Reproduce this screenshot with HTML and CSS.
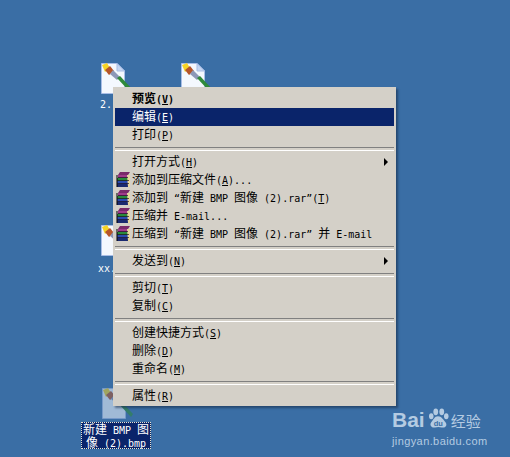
FILE: index.html
```html
<!DOCTYPE html>
<html lang="zh-CN">
<head>
  <meta charset="UTF-8" />
  <title>桌面右键菜单</title>
  <link rel="stylesheet" href="styles.css">
</head>
<body>
  <svg class="defs" width="0" height="0">
    <symbol id="bmp" viewBox="0 0 32 32">
      <path d="M1.5 0.5H17L24.5 8V30.5H1.5Z" fill="#f4f8fe" stroke="#a8bde6"/>
      <path d="M17 0.5V8H24.5Z" fill="#c5d6f2" stroke="#a8bde6"/>
      <path d="M2 2L7 0L10 5L5 9Z" fill="#f5d327"/>
      <path d="M5 7L10 3L14 8L9 12Z" fill="#b5552a"/>
      <path d="M10 11L13 7L20 14L17 17Z" fill="#8c97b8"/>
      <path d="M17 15L20 13L32 26L30 29Z" fill="#2f8a3a"/>
    </symbol>
    <symbol id="rar" viewBox="0 0 16 16">
      <path d="M4 0H14L12 3H2Z" fill="#7a2a6a"/>
      <path d="M2 3H12V6H2Z" fill="#a03a8a"/>
      <path d="M1 6H13V9H1Z" fill="#2a8a3a"/>
      <path d="M1 9H13V12H1Z" fill="#2a4ab0"/>
      <path d="M1 12H14V15H1Z" fill="#1a2a70"/>
      <path d="M11 3H14V15H12Z" fill="#e8d8a0"/>
      <path d="M1 3V15" stroke="#000"/>
      <path d="M2 5.5H12M1 8.5H13M1 11.5H13" stroke="#1a1020" stroke-width="0.7"/>
    </symbol>
  </svg>

  <div class="desktop-icon icon-one">
    <svg class="file-icon"><use href="#bmp"/></svg>
    <span class="icon-label">2.</span>
  </div>
  <div class="desktop-icon icon-two">
    <svg class="file-icon"><use href="#bmp"/></svg>
  </div>
  <div class="desktop-icon icon-three">
    <svg class="file-icon"><use href="#bmp"/></svg>
    <span class="icon-label">xx.</span>
  </div>
  <div class="desktop-icon icon-selected">
    <svg class="file-icon"><use href="#bmp"/></svg>
    <div class="selected-label">
      <div class="label-line">新建 <span class="en">BMP</span> 图</div>
      <div class="label-line">像 <span class="en">(2).bmp</span></div>
    </div>
  </div>

  <ul class="menu">
    <li class="item default">预览<span class="en">(<u>V</u>)</span></li>
    <li class="item active">编辑<span class="en">(<u>E</u>)</span></li>
    <li class="item">打印<span class="en">(<u>P</u>)</span></li>
    <li class="sep"></li>
    <li class="item more">打开方式<span class="en">(<u>H</u>)</span></li>
    <li class="item"><svg class="rar-icon"><use href="#rar"/></svg>添加到压缩文件<span class="en">(<u>A</u>)...</span></li>
    <li class="item"><svg class="rar-icon"><use href="#rar"/></svg>添加到 <span class="en">“</span>新建 <span class="en">BMP</span> 图像 <span class="en">(2).rar”(<u>T</u>)</span></li>
    <li class="item"><svg class="rar-icon"><use href="#rar"/></svg>压缩并 <span class="en">E-mail...</span></li>
    <li class="item"><svg class="rar-icon"><use href="#rar"/></svg>压缩到 <span class="en">“</span>新建 <span class="en">BMP</span> 图像 <span class="en">(2).rar”</span> 并 <span class="en">E-mail</span></li>
    <li class="sep"></li>
    <li class="item more">发送到<span class="en">(<u>N</u>)</span></li>
    <li class="sep"></li>
    <li class="item">剪切<span class="en">(<u>T</u>)</span></li>
    <li class="item">复制<span class="en">(<u>C</u>)</span></li>
    <li class="sep"></li>
    <li class="item">创建快捷方式<span class="en">(<u>S</u>)</span></li>
    <li class="item">删除<span class="en">(<u>D</u>)</span></li>
    <li class="item">重命名<span class="en">(<u>M</u>)</span></li>
    <li class="sep"></li>
    <li class="item">属性<span class="en">(<u>R</u>)</span></li>
  </ul>

  <div class="watermark">
    <div class="brand">
      <span class="bai">Bai</span>
      <svg class="paw" viewBox="0 0 32 28">
        <ellipse cx="7" cy="11" rx="3" ry="4"/>
        <ellipse cx="13" cy="5" rx="3.2" ry="4.5"/>
        <ellipse cx="21" cy="5" rx="3.2" ry="4.5"/>
        <ellipse cx="27" cy="11" rx="3" ry="4"/>
        <path d="M16 11C11 11 10 16 7 19C4 23 8 27 12 26C15 25 18 25 21 26C26 27 29 23 26 19C23 16 21 11 16 11Z"/>
        <text x="16.5" y="24" class="paw-text">du</text>
      </svg>
      <span class="jy">经验</span>
    </div>
    <div class="site">jingyan.baidu.com</div>
  </div>
</body>
</html>
```

FILE: styles.css
```css
* {
  box-sizing: border-box;
  margin: 0;
  padding: 0;
}

html, body {
  height: 100%;
  overflow: hidden;
}

body {
  background-color: #3a6ea5;
  font-family: "Noto Sans CJK SC", sans-serif;
  font-size: 12px;
  line-height: 18px;
  word-spacing: 3.3px;
  color: #000;
}

.defs {
  position: absolute;
}

.en {
  font-family: "DejaVu Sans Mono", monospace;
  font-size: 10px;
  line-height: 1;
}

/* desktop icons */
.desktop-icon {
  position: absolute;
  width: 70px;
  display: flex;
  flex-direction: column;
  align-items: center;
}

.file-icon {
  width: 32px;
  height: 32px;
  flex: none;
}

.icon-one { left: 81px; top: 63px; }
.icon-two { left: 161px; top: 63px; }
.icon-three { left: 81px; top: 225px; }
.icon-selected { left: 81px; top: 388px; }

.icon-selected .file-icon {
  opacity: 0.55;
  margin-left: 2px;
}

.icon-label {
  align-self: flex-start;
  margin: 1px 0 0 19px;
  color: #fff;
  font-size: 10px;
  font-family: "DejaVu Sans Mono", monospace;
}

.icon-three .icon-label {
  margin: 3px 0 0 17px;
}

.selected-label {
  margin-top: 2px;
  width: 70px;
  height: 27px;
  background: #0a246a;
  color: #fff;
  border: 1px dotted #e8e4d0;
  text-align: center;
  white-space: nowrap;
}

.label-line {
  line-height: 12.5px;
}

/* context menu */
.menu {
  position: absolute;
  left: 113px;
  top: 87px;
  width: 283px;
  height: 319px;
  list-style: none;
  background: #d4d0c8;
  border: 1px solid;
  border-color: #fff #404040 #404040 #fff;
  outline: 1px solid #d4d0c8;
  outline-offset: -1px;
  padding: 2px 1px;
  box-shadow: 2px 2px 2px rgba(20, 40, 70, 0.55);
}

.item {
  position: relative;
  height: 18px;
  line-height: 16px;
  padding-left: 17px;
  white-space: nowrap;
}

.default {
  font-weight: 700;
}

.active {
  background: #0a246a;
  color: #fff;
}

.more::after {
  content: "";
  position: absolute;
  right: 6px;
  top: 5px;
  border-left: 4px solid #000;
  border-top: 4px solid transparent;
  border-bottom: 4px solid transparent;
}

.sep {
  height: 9px;
  padding-top: 3px;
}

.sep::before {
  content: "";
  display: block;
  height: 2px;
  border-top: 1px solid #808080;
  border-bottom: 1px solid #fff;
}

.rar-icon {
  position: absolute;
  left: 1px;
  top: 1px;
  width: 16px;
  height: 16px;
}

/* baidu mark */
.watermark {
  position: absolute;
  left: 392px;
  top: 402px;
  color: #b4cbe2;
  word-spacing: 0;
}

.brand {
  display: flex;
  align-items: flex-end;
  height: 30px;
}

.bai {
  font-family: "Liberation Sans", sans-serif;
  font-weight: 700;
  font-size: 21px;
  line-height: 24px;
}

.paw {
  width: 24px;
  height: 27px;
  fill: #b4cbe2;
  margin: 0 1px;
}

.paw-text {
  font-family: "Liberation Sans", sans-serif;
  font-weight: 700;
  font-size: 10px;
  text-anchor: middle;
  fill: #3a6ea5;
}

.jy {
  font-size: 15px;
  line-height: 22px;
}

.site {
  margin-top: 2px;
  font-family: "Liberation Sans", sans-serif;
  font-size: 11px;
  line-height: 14px;
  letter-spacing: 0.4px;
}
```
